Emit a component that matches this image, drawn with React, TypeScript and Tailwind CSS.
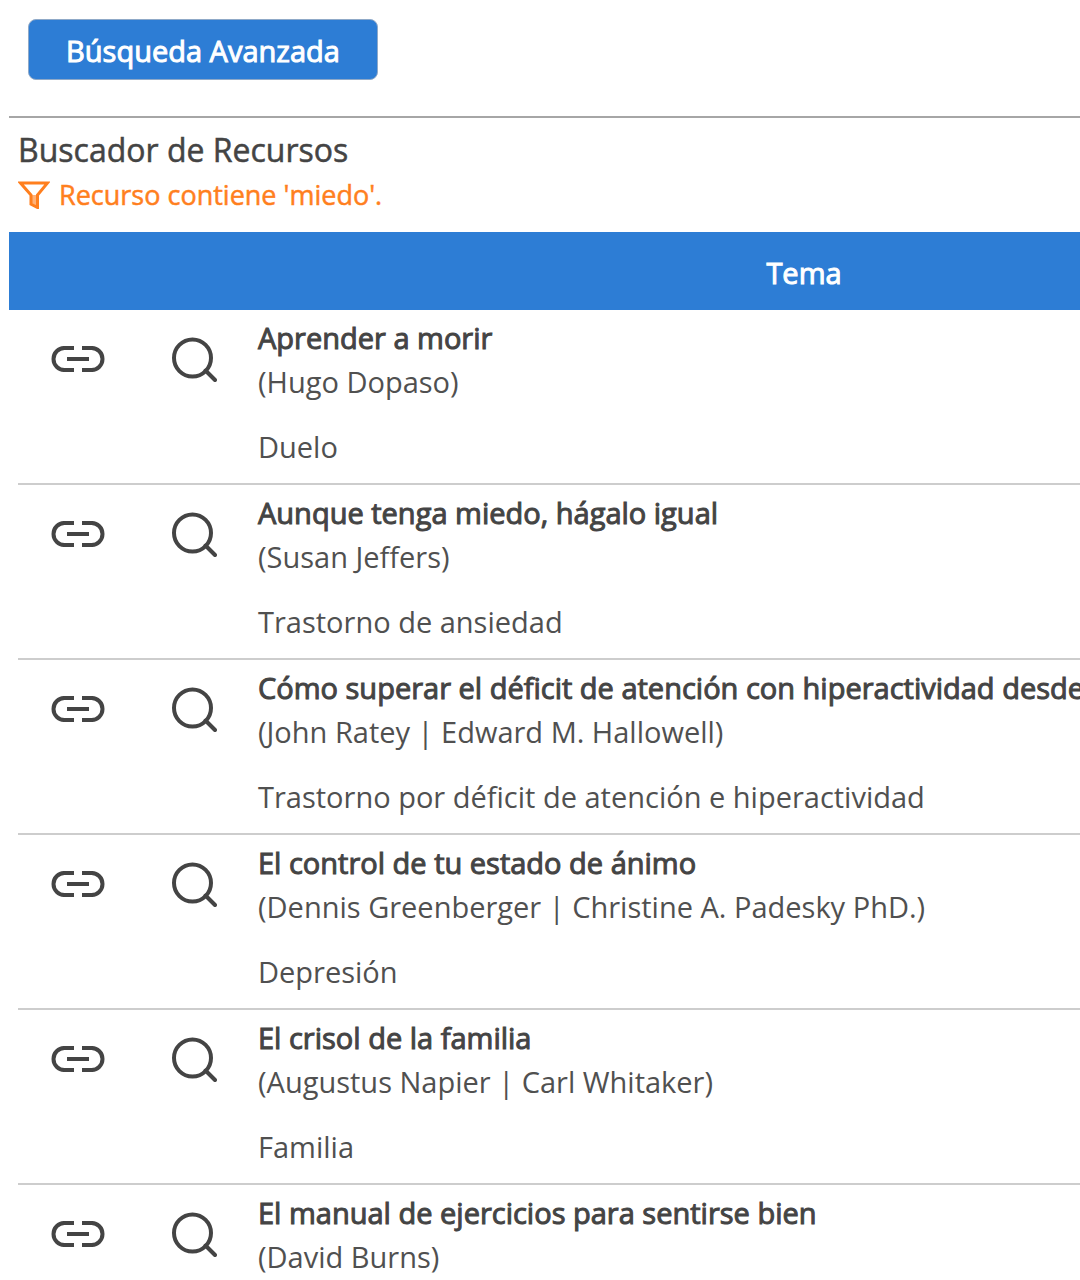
interface Resource {
  title: string;
  authors: string;
  topic: string;
}

const resources: Resource[] = [
  { title: 'Aprender a morir', authors: 'Hugo Dopaso', topic: 'Duelo' },
  { title: 'Aunque tenga miedo, hágalo igual', authors: 'Susan Jeffers', topic: 'Trastorno de ansiedad' },
  {
    title: 'Cómo superar el déficit de atención con hiperactividad desde',
    authors: 'John Ratey | Edward M. Hallowell',
    topic: 'Trastorno por déficit de atención e hiperactividad',
  },
  {
    title: 'El control de tu estado de ánimo',
    authors: 'Dennis Greenberger | Christine A. Padesky PhD.',
    topic: 'Depresión',
  },
  { title: 'El crisol de la familia', authors: 'Augustus Napier | Carl Whitaker', topic: 'Familia' },
  { title: 'El manual de ejercicios para sentirse bien', authors: 'David Burns', topic: '' },
];

function LinkIcon() {
  return (
    <svg width="54" height="26" viewBox="0 0 54 26" fill="none" stroke="currentColor" strokeWidth="4" aria-hidden="true">
      <path d="M23 2H14a11 11 0 0 0-11.500 11a11 11 0 0 0 11.500 11H23M31 2h9a11 11 0 0 1 11.500 11a11 11 0 0 1-11.500 11H31" />
      <path d="M16 13h22" />
    </svg>
  );
}

function SearchIcon() {
  return (
    <svg width="46" height="46" viewBox="0 0 46 46" fill="none" stroke="currentColor" strokeWidth="4" aria-hidden="true">
      <circle cx="21.500" cy="21" r="18.500" />
      <path d="M34.500 33.500l9.500 9.500" strokeLinecap="round" />
    </svg>
  );
}

function FilterIcon() {
  return (
    <svg width="32" height="28" viewBox="0 0 32 28" fill="none" stroke="currentColor" strokeWidth="3" aria-hidden="true">
      <path d="M2.500 2h27L19.500 14v12.500L13 23V14z" />
      <path d="M14 14h5v11l-5-3z" fill="currentColor" fillOpacity="0.6" stroke="none" />
    </svg>
  );
}

function ResourceRow({ resource }: { resource: Resource }) {
  return (
    <tr className="h-[175px] align-top">
      <td />
      <td className="border-b-2 border-[#cdcdcd]">
        <a href="#enlace" aria-label={`Enlace a ${resource.title}`} className="flex justify-center pt-9">
          <LinkIcon />
        </a>
      </td>
      <td className="border-b-2 border-[#cdcdcd]">
        <a href="#detalle" aria-label={`Ver ${resource.title}`} className="flex justify-center pt-[27px]">
          <SearchIcon />
        </a>
      </td>
      <td className="border-b-2 border-[#cdcdcd] pt-[6px] pl-2">
        <p className="leading-[44px] [-webkit-text-stroke:1px_#444]">{resource.title}</p>
        <p className="leading-[43px] text-[#505050]">({resource.authors})</p>
        <p className="mt-[22px] leading-[44px] text-[#505050]">{resource.topic}</p>
      </td>
    </tr>
  );
}

export default function App() {
  return (
    <main className="h-screen overflow-hidden bg-white pl-[9px] font-['Open_Sans',sans-serif] text-[29px] text-[#444]">
      <div className="border-b-2 border-[#a6a6a6] pt-[19px] pb-[36px] pl-[19px]">
        <button
          type="button"
          className="h-[61px] w-[350px] rounded-lg border border-[#8fa9c8] bg-[#2d7dd5] pt-0.5 text-white [-webkit-text-stroke:1px_#fff]"
        >
          Búsqueda Avanzada
        </button>
      </div>

      <header className="pt-[10px] pl-[9px]">
        <h1 className="text-[32px] leading-[44px] [-webkit-text-stroke:0.5px_#444]">Buscador de Recursos</h1>
        <p className="flex h-[46px] items-center gap-[9px] text-[27px] text-[#ff7f1e] [-webkit-text-stroke:0.5px_#ff7f1e]">
          <FilterIcon />
          Recurso contiene 'miedo'.
        </p>
      </header>

      <table className="mt-[14px] w-[1349px] table-fixed border-separate border-spacing-0 whitespace-nowrap">
        <colgroup>
          <col className="w-[9px]" />
          <col className="w-[119px]" />
          <col className="w-[113px]" />
          <col />
        </colgroup>
        <thead>
          <tr className="h-[78px] bg-[#2d7dd5] text-white">
            <td colSpan={3} />
            <th scope="col" className="pt-1 font-normal [-webkit-text-stroke:1px_#fff]">Tema</th>
          </tr>
        </thead>
        <tbody>
          {resources.map((resource) => (
            <ResourceRow key={resource.title} resource={resource} />
          ))}
        </tbody>
      </table>
    </main>
  );
}
